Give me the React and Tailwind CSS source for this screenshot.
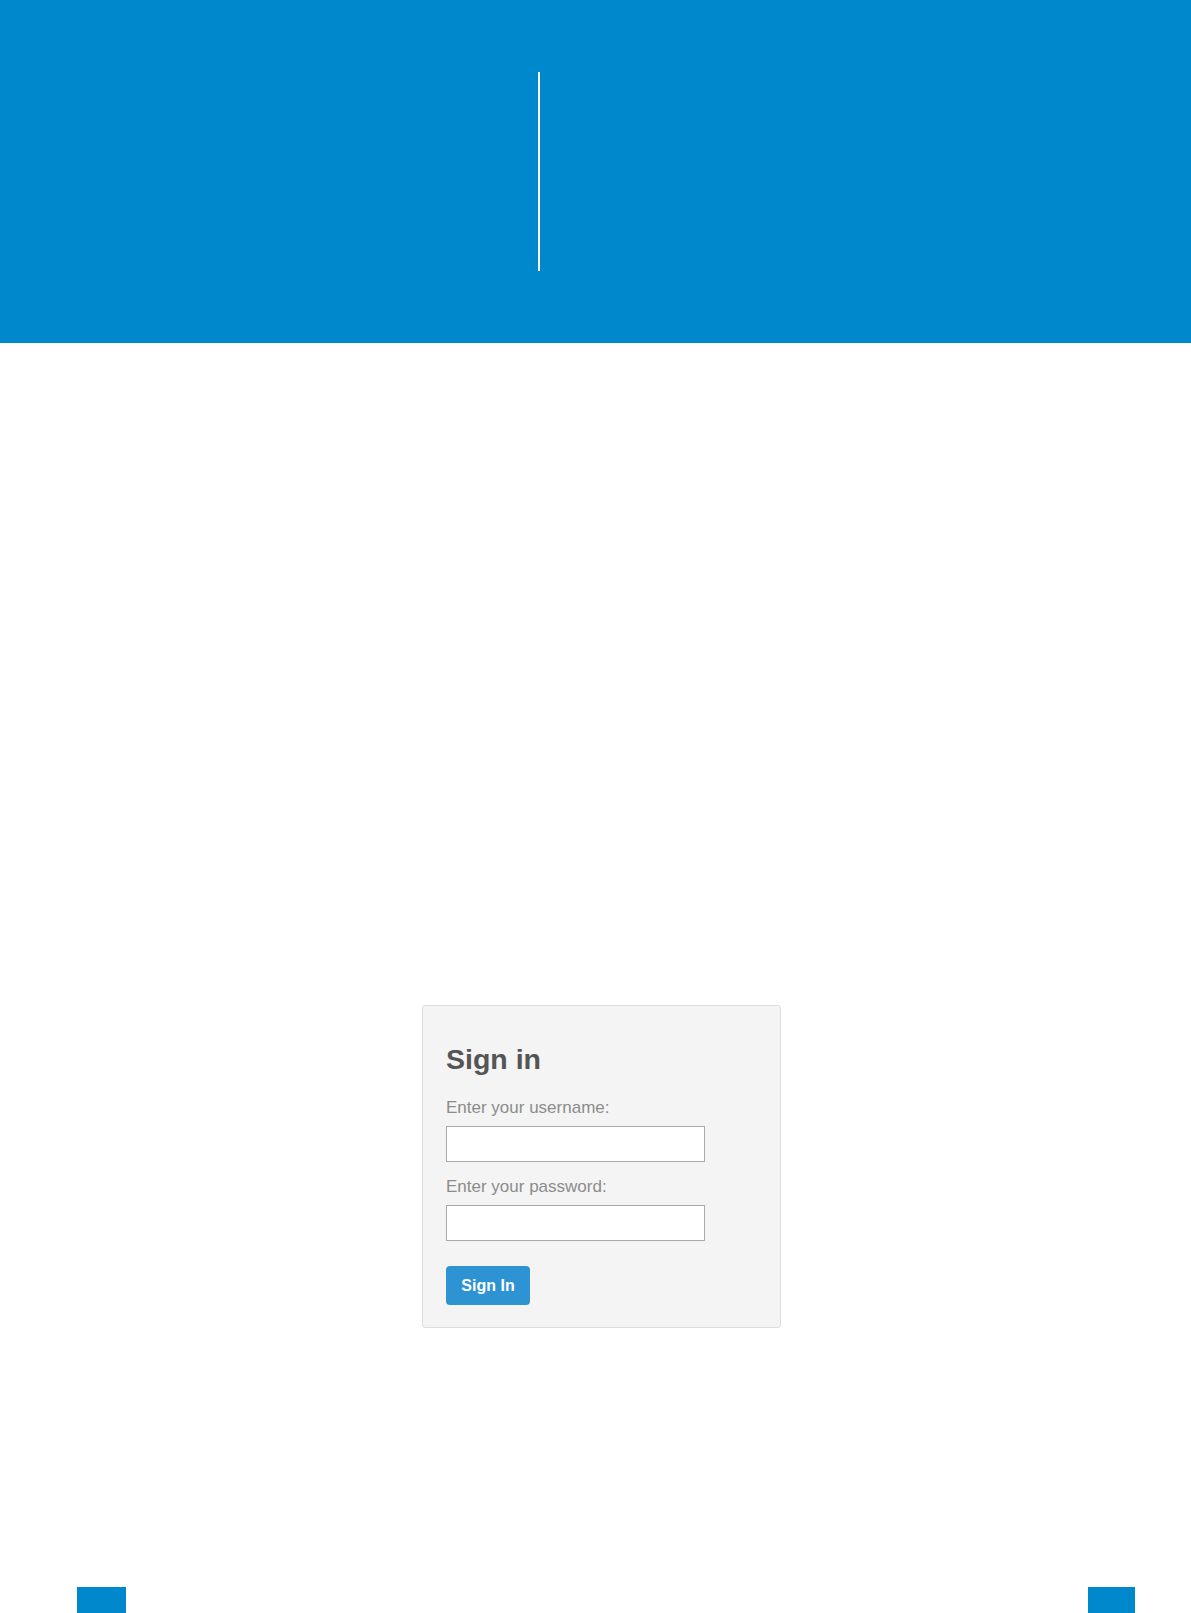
export default function App() {
  return (
    <div className="w-[1191px] bg-white" style={{ fontFamily: '"Liberation Sans", Arial, sans-serif' }}>
      <header className="h-[343px] bg-[#0088cc] pt-[72px]">
        <div className="ml-[538px] w-[2px] h-[199px] bg-white" />
      </header>
      <main className="pt-[662px]">
        <div className="ml-[422px] w-[359px] h-[323px] rounded-[3px] border border-[#dcdcdc] bg-[#f4f4f4] px-[23px] pt-[37px]">
          <h1 className="text-[28.5px] leading-[32px] font-bold text-[#555555]">Sign in</h1>
          <label className="block mt-[21px] text-[17px] leading-[24px] text-[#8c8c8c]">Enter your username:</label>
          <input type="text" className="block mt-[6px] w-[259px] h-[36px] bg-white border border-[#aaaaaa] outline-none" />
          <label className="block mt-[13px] text-[17px] leading-[24px] text-[#8c8c8c]">Enter your password:</label>
          <input type="password" className="block mt-[6px] w-[259px] h-[36px] bg-white border border-[#aaaaaa] outline-none" />
          <button className="mt-[25px] w-[84px] h-[39px] rounded-[4px] bg-[#2e93d2] text-white font-bold text-[16px]">Sign In</button>
        </div>
      </main>
      <footer className="mt-[259px] flex justify-between pl-[77px] pr-[56px]">
        <div className="w-[49px] h-[26px] bg-[#0088cc]" />
        <div className="w-[47px] h-[26px] bg-[#0088cc]" />
      </footer>
    </div>
  );
}
